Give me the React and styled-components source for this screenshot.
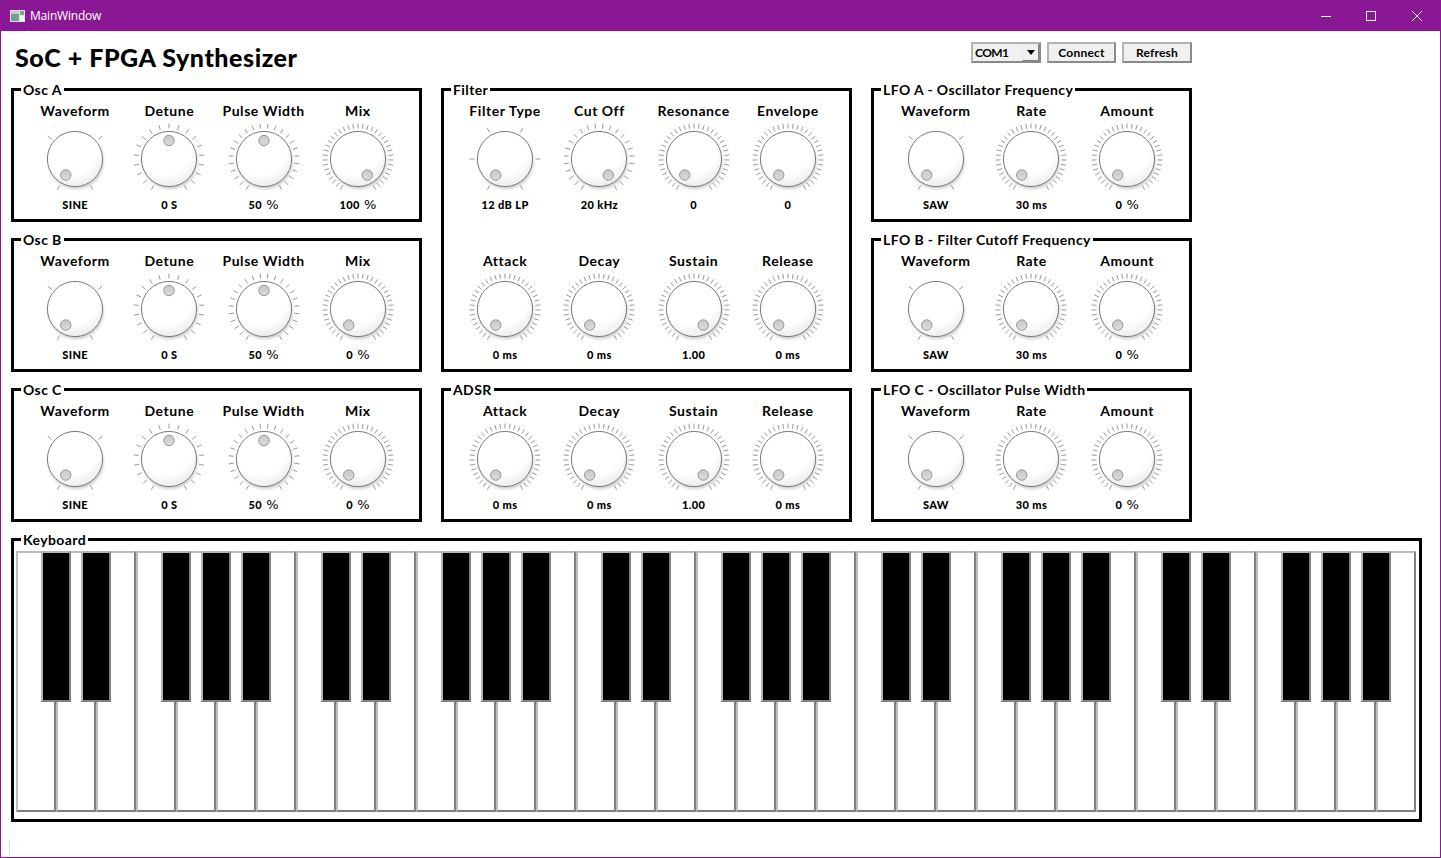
import React from 'react';
import styled, { createGlobalStyle } from 'styled-components';

const PURPLE = '#8a1894';
const FONT = `Lato, "Open Sans", sans-serif`;

const GlobalStyle = createGlobalStyle`
  html, body { margin: 0; padding: 0; background: #fff; }
`;

const Window = styled.div`
  box-sizing: border-box;
  width: 1441px;
  height: 858px;
  border: 1px solid ${PURPLE};
  border-top: 0;
  display: flex;
  flex-direction: column;
  overflow: hidden;
  font-family: ${FONT};
  color: #000;
`;

const TitleBar = styled.div`
  height: 31px;
  margin: 0 -1px;
  flex: none;
  background: ${PURPLE};
  color: #fff;
  display: flex;
  align-items: center;
  padding: 0 1px 0 10px;
  font: 12px "Open Sans", sans-serif;
`;

const TitleText = styled.span`
  margin-left: 5px;
  flex: 1;
  letter-spacing: -0.2px;
`;

const WinButton = styled.div`
  width: 46px;
  height: 31px;
  display: flex;
  align-items: center;
  justify-content: center;
  svg { display: block; overflow: visible; }
`;

const Content = styled.div`
  padding: 0 0 0 10px;
  flex: 1;
  display: flex;
  flex-direction: column;
`;

const Header = styled.header`
  width: 1181px;
  height: 57px;
  display: flex;
  justify-content: space-between;
`;

const AppTitle = styled.h1`
  margin: 12px 0 0 4px;
  font-size: 25px;
  line-height: 28px;
  font-weight: 900;
  letter-spacing: 0.55px;
`;

const Controls = styled.div`
  display: flex;
  gap: 6px;
  padding-top: 11px;
`;

const RaisedButton = styled.button`
  box-sizing: border-box;
  width: ${p => p.$width}px;
  height: 21px;
  padding: 0;
  background: #f0f0f0;
  border: 2px solid;
  border-color: #b4b4b4 #8a8a8a #8a8a8a #b4b4b4;
  font: 700 12px/16px ${FONT};
  letter-spacing: 0.2px;
  color: #000;
`;

const Combo = styled.div`
  box-sizing: border-box;
  width: 70px;
  height: 21px;
  background: #f0f0f0;
  border: 2px solid;
  border-color: #b4b4b4 #8a8a8a #8a8a8a #b4b4b4;
  display: flex;
  align-items: center;
  justify-content: space-between;
  padding-left: 2px;
  font: 700 12px/16px ${FONT};
  letter-spacing: -0.6px;
`;

const ComboArrow = styled.div`
  box-sizing: border-box;
  width: 17px;
  height: 17px;
  background: #f0f0f0;
  border: 1px solid;
  border-color: #e8e8e8 #808080 #808080 #e8e8e8;
  display: flex;
  align-items: center;
  justify-content: center;
  &::after {
    content: '';
    border-left: 4px solid transparent;
    border-right: 4px solid transparent;
    border-top: 5px solid #000;
  }
`;

const PanelGrid = styled.div`
  width: 1181px;
  display: grid;
  grid-template-columns: 411px 411px 321px;
  grid-template-rows: repeat(3, 134px);
  column-gap: 19px;
  row-gap: 16px;
`;

const Group = styled.section`
  position: relative;
  box-sizing: border-box;
  border: 3px solid #000;
  grid-row: ${p => (p.$tall ? 'span 2' : 'auto')};
`;

const Legend = styled.span`
  position: absolute;
  top: -10px;
  left: 7px;
  padding: 0 2px;
  background: #fff;
  font-size: 14px;
  line-height: 17px;
  font-weight: 700;
  letter-spacing: 0.4px;
  white-space: pre;
`;

const KnobRow = styled.div`
  display: grid;
  grid-template-columns: repeat(${p => p.$cols}, 1fr);
  padding: 12px 14px 0;
  row-gap: 41px;
`;

const KnobCell = styled.div`
  display: flex;
  flex-direction: column;
  align-items: center;
`;

const KnobLabel = styled.div`
  font-size: 14px;
  line-height: 16px;
  font-weight: 700;
  letter-spacing: 0.55px;
  white-space: nowrap;
`;

const KnobDial = styled.svg`
  display: block;
  width: 76px;
  height: 76px;
  margin-top: 2px;
  overflow: visible;
`;

const KnobValue = styled.div`
  margin-top: 1px;
  font-size: 11px;
  line-height: 14px;
  font-weight: 900;
  letter-spacing: 0.4px;
  white-space: nowrap;
`;

const Percent = styled.span`
  font: 400 13px/14px "DejaVu Sans", sans-serif;
  letter-spacing: 0;
`;

const SharedDefs = styled.svg`
  position: absolute;
  width: 0;
  height: 0;
`;

const KeyboardGroup = styled.section`
  position: relative;
  box-sizing: border-box;
  width: 1411px;
  height: 284px;
  margin-top: 16px;
  border: 3px solid #000;
  padding: 10px 3px 7px 2px;
  display: flex;
`;

const WhiteKey = styled.div`
  position: relative;
  box-sizing: border-box;
  width: 40px;
  height: 261px;
  background: #fff;
  border: 2px solid;
  border-color: #bcbcbc #808080 #808080 #bcbcbc;
`;

const BlackKey = styled.div`
  position: absolute;
  z-index: 1;
  top: -2px;
  right: -17px;
  box-sizing: border-box;
  width: 30px;
  height: 151px;
  background: #000;
  border: 2px solid;
  border-color: #b4b4b4 #808080 #808080 #b4b4b4;
`;

const StatusBar = styled.footer`
  flex: 1;
  margin-left: -2px;
  padding: 17px 0 2px;
  display: flex;
`;

const StatusGrip = styled.div`
  width: 1px;
  background: #dcdcdc;
`;

const rad = deg => (deg * Math.PI) / 180;

const Knob = ({ label, value, unit, ticks, pos = 'min' }) => {
  const indicator = { min: -150, mid: 0, max: 150 }[pos];
  const marks = Array.from({ length: ticks }, (_, i) => -150 + (300 * i) / (ticks - 1));
  return (
    <KnobCell>
      <KnobLabel>{label}</KnobLabel>
      <KnobDial viewBox="-38 -38 76 76">
        {marks.map(a => (
          <line
            key={a}
            x1={30.5 * Math.sin(rad(a))}
            y1={-30.5 * Math.cos(rad(a))}
            x2={35.5 * Math.sin(rad(a))}
            y2={-35.5 * Math.cos(rad(a))}
            stroke="#999"
            strokeWidth="1"
          />
        ))}
        <circle cx="1" cy="2.5" r="27.5" fill="#000" opacity="0.2" filter="url(#knobShadow)" />
        <circle r="27.6" fill="url(#knobFace)" stroke="#7a7a7a" strokeWidth="1" />
        <circle
          cx={18.5 * Math.sin(rad(indicator))}
          cy={-18.5 * Math.cos(rad(indicator))}
          r="5.2"
          fill="url(#knobDot)"
          stroke="#979797"
          strokeWidth="1"
        />
      </KnobDial>
      <KnobValue>
        {value}
        {unit && <Percent> {unit}</Percent>}
      </KnobValue>
    </KnobCell>
  );
};

const oscKnobs = mix => [
  { label: 'Waveform', value: 'SINE', ticks: 4 },
  { label: 'Detune', value: '0 S', ticks: 19, pos: 'mid' },
  { label: 'Pulse Width', value: '50', unit: '%', ticks: 24, pos: 'mid' },
  mix,
];

const adsrKnobs = [
  { label: 'Attack', value: '0 ms', ticks: 37 },
  { label: 'Decay', value: '0 ms', ticks: 37 },
  { label: 'Sustain', value: '1.00', ticks: 37, pos: 'max' },
  { label: 'Release', value: '0 ms', ticks: 37 },
];

const lfoKnobs = [
  { label: 'Waveform', value: 'SAW', ticks: 4 },
  { label: 'Rate', value: '30 ms', ticks: 37 },
  { label: 'Amount', value: '0', unit: '%', ticks: 37 },
];

const filterKnobs = [
  { label: 'Filter Type', value: '12 dB LP', ticks: 6 },
  { label: 'Cut Off', value: '20 kHz', ticks: 24, pos: 'max' },
  { label: 'Resonance', value: '0', ticks: 37 },
  { label: 'Envelope', value: '0', ticks: 37 },
  ...adsrKnobs,
];

const panels = [
  { title: 'Osc A', knobs: oscKnobs({ label: 'Mix', value: '100', unit: '%', ticks: 37, pos: 'max' }) },
  { title: 'Filter', knobs: filterKnobs, tall: true },
  { title: 'LFO A - Oscillator Frequency', knobs: lfoKnobs },
  { title: 'Osc B', knobs: oscKnobs({ label: 'Mix', value: '0', unit: '%', ticks: 37 }) },
  { title: 'LFO B - Filter Cutoff Frequency', knobs: lfoKnobs },
  { title: 'Osc C', knobs: oscKnobs({ label: 'Mix', value: '0', unit: '%', ticks: 37 }) },
  { title: 'ADSR', knobs: adsrKnobs },
  { title: 'LFO C - Oscillator Pulse Width', knobs: lfoKnobs },
];

// a black key sits on the right edge of these white keys (C D F G A in each octave)
const hasBlack = i => [0, 1, 3, 4, 5].includes(i % 7);

const App = () => (
  <Window>
    <GlobalStyle />
    <SharedDefs aria-hidden="true">
      <defs>
        <radialGradient id="knobFace" cx="0.42" cy="0.28" r="0.82">
          <stop offset="0" stopColor="#fff" />
          <stop offset="0.62" stopColor="#fff" />
          <stop offset="0.74" stopColor="#f6f6f6" />
          <stop offset="1" stopColor="#e6e6e6" />
        </radialGradient>
        <linearGradient id="knobDot" x1="0" y1="0" x2="0" y2="1">
          <stop offset="0" stopColor="#c8c8c8" />
          <stop offset="1" stopColor="#dcdcdc" />
        </linearGradient>
        <filter id="knobShadow" x="-20%" y="-20%" width="140%" height="140%">
          <feGaussianBlur stdDeviation="1.5" />
        </filter>
      </defs>
    </SharedDefs>
    <TitleBar>
      <svg width="15" height="12" viewBox="0 0 15 12">
        <rect x="0" y="0" width="15" height="12" fill="#dfe3e3" />
        <rect x="1" y="1" width="8" height="10" fill="#6f9ea4" />
        <rect x="1" y="1" width="8" height="3" fill="#b9d0d2" />
        <rect x="10" y="1" width="4" height="4" fill="#8f9d9f" />
        <rect x="10" y="6" width="4" height="5" fill="#f4f4f4" />
      </svg>
      <TitleText>MainWindow</TitleText>
      <WinButton>
        <svg width="10" height="10" viewBox="0 0 10 10">
          <path d="M1 5.5H11" stroke="#fff" strokeWidth="1" />
        </svg>
      </WinButton>
      <WinButton>
        <svg width="10" height="10" viewBox="0 0 10 10">
          <rect x="0.5" y="0.5" width="9" height="9" fill="none" stroke="#fff" strokeWidth="1" />
        </svg>
      </WinButton>
      <WinButton>
        <svg width="10" height="10" viewBox="0 0 10 10">
          <path d="M0 0L10 10M10 0L0 10" stroke="#fff" strokeWidth="1" />
        </svg>
      </WinButton>
    </TitleBar>
    <Content>
      <Header>
        <AppTitle>SoC + FPGA Synthesizer</AppTitle>
        <Controls>
          <Combo>
            COM1
            <ComboArrow />
          </Combo>
          <RaisedButton $width={69}>Connect</RaisedButton>
          <RaisedButton $width={70}>Refresh</RaisedButton>
        </Controls>
      </Header>
      <PanelGrid>
        {panels.map(panel => (
          <Group key={panel.title} $tall={panel.tall}>
            <Legend>{panel.title}</Legend>
            <KnobRow $cols={panel.knobs.length === 3 ? 3 : 4}>
              {panel.knobs.map((knob, i) => (
                <Knob key={i} {...knob} />
              ))}
            </KnobRow>
          </Group>
        ))}
      </PanelGrid>
      <KeyboardGroup>
        <Legend>Keyboard</Legend>
        {Array.from({ length: 35 }, (_, i) => (
          <WhiteKey key={i}>{hasBlack(i) && i < 34 && <BlackKey />}</WhiteKey>
        ))}
      </KeyboardGroup>
      <StatusBar>
        <StatusGrip />
      </StatusBar>
    </Content>
  </Window>
);

export default App;
